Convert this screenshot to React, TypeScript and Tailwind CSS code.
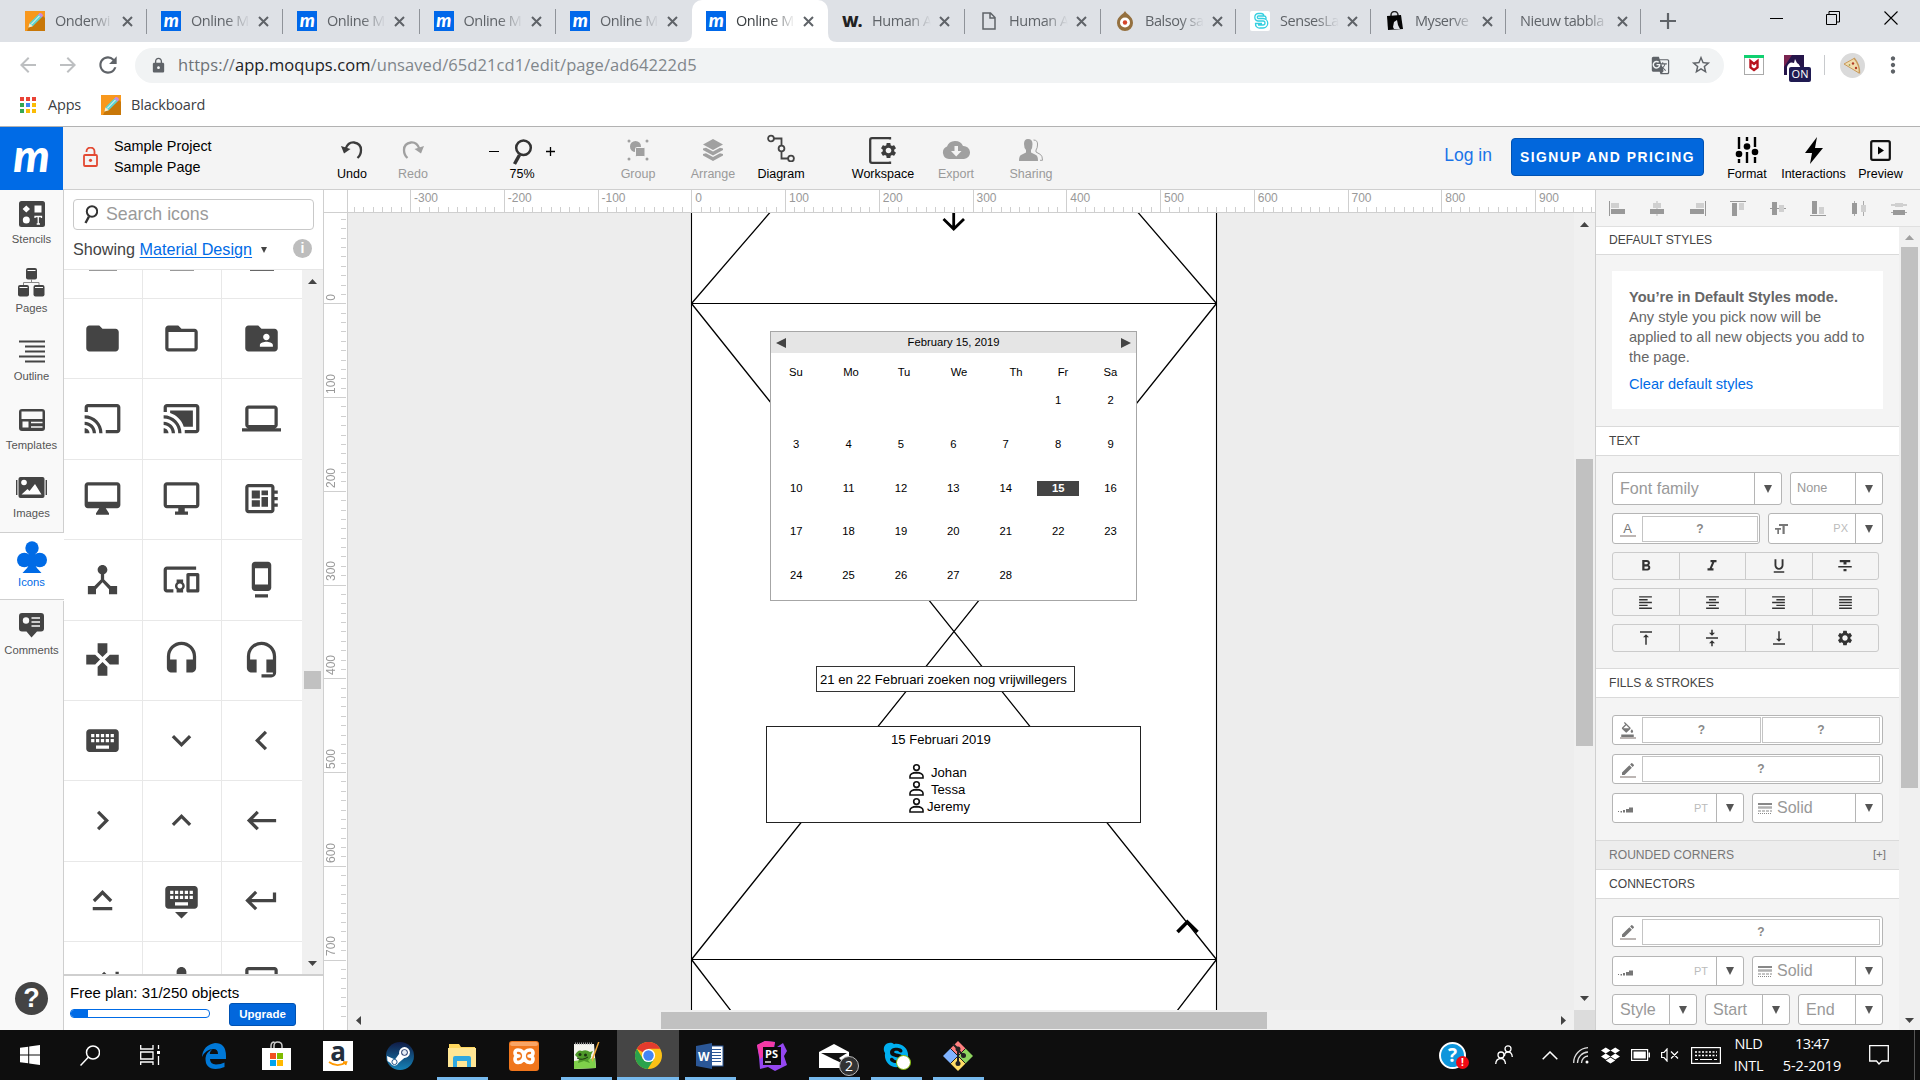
import React from "react";
import {
  MdFolder, MdFolderOpen, MdFolderShared, MdCast, MdCastConnected, MdLaptop, MdOutlineDesktopMac, MdOutlineDesktopWindows,
  MdDeveloperBoard, MdDeviceHub, MdDevicesOther, MdDock, MdGamepad, MdHeadset, MdHeadsetMic, MdKeyboard,
  MdKeyboardArrowDown, MdKeyboardArrowLeft, MdKeyboardArrowRight, MdKeyboardArrowUp, MdKeyboardBackspace,
  MdKeyboardCapslock, MdKeyboardHide, MdKeyboardReturn, MdKeyboardTab, MdKeyboardVoice, MdLaptopMac,
  MdArrowBack, MdArrowForward, MdRefresh, MdLock, MdStarBorder, MdMoreVert, MdGTranslate, MdSettings, MdEdit,
  MdFormatColorFill, MdVerticalAlignTop, MdVerticalAlignCenter, MdVerticalAlignBottom,
  MdFormatAlignLeft, MdFormatAlignCenter, MdFormatAlignRight, MdFormatAlignJustify, MdFormatBold, MdFormatItalic,
  MdFormatUnderlined, MdFormatStrikethrough,
} from "react-icons/md";
import { FaSkype, FaDropbox } from "react-icons/fa";

/* ---------- shared bits ---------- */

function Triangle({ dir, className = "" }: { dir: "up" | "down" | "left" | "right"; className?: string }) {
  const d = {
    up: "M0 5 L4.5 0 L9 5Z",
    down: "M0 0 L9 0 L4.5 5Z",
    left: "M5 0 L5 9 L0 4.5Z",
    right: "M0 0 L5 4.5 L0 9Z",
  }[dir];
  const wide = dir === "up" || dir === "down";
  return (
    <svg width={wide ? 9 : 5} height={wide ? 5 : 9} className={className} fill="currentColor">
      <path d={d} />
    </svg>
  );
}

function MLogo({ big = false }: { big?: boolean }) {
  return big ? (
    <div className="flex h-[63px] w-[63px] shrink-0 items-center justify-center bg-[#006be6]">
      <span className="-mt-2 font-['Lato'] text-[46px] leading-none font-black text-white italic">m</span>
    </div>
  ) : (
    <div className="flex h-5 w-5 shrink-0 items-center justify-center overflow-hidden bg-[#0068ea]">
      <span className="-mt-1 font-['Lato'] text-[19px] leading-none font-black text-white italic">m</span>
    </div>
  );
}

function PencilFavicon() {
  return (
    <svg width="20" height="20" viewBox="0 0 20 20" className="shrink-0">
      <rect width="20" height="20" fill="#f8981d" />
      <path d="M4 16 L17 4 L20 7 V20 H2Z" fill="#c87708" />
      <path d="M3.5 16.5 L4.6 12 L13.5 3.2 L16.8 6.2 L8 15Z" fill="#5fd3cf" />
      <path d="M6 13.6 L14.8 4.6" stroke="#fff" strokeWidth="1" />
      <path d="M13.2 3.4 L14.6 2 Q17.6 1.8 18 5 L16.8 6.4Z" fill="#c98be0" />
      <path d="M3.5 16.5 L4.4 12.6 L7.8 15.2Z" fill="#ffe9c8" />
    </svg>
  );
}

/* ---------- browser chrome ---------- */

type Tab = { title: string; icon: React.ReactNode; w: string; active?: boolean; sep?: boolean };

const WIcon = <span className="w-5 shrink-0 font-['Open_Sans'] text-[16px] leading-5 font-extrabold tracking-tighter text-[#222]">W.</span>;
const DocIcon = (
  <svg width="20" height="20" viewBox="0 0 20 20" className="shrink-0" fill="none" stroke="#5f6368" strokeWidth="1.5">
    <path d="M4 2 H11.5 L16 6.5 V18 H4Z M11 2 V7 H16" />
  </svg>
);
const BalsoyIcon = (
  <svg width="20" height="22" viewBox="0 0 20 22" className="shrink-0">
    <path d="M10 1 C11 4 18 6 18 13 A8 8 0 0 1 2 13 C2 6 9 4 10 1Z" fill="#94703f" />
    <circle cx="10" cy="12.5" r="5" fill="#fff" />
    <circle cx="10" cy="12.5" r="2.2" fill="#d4452c" />
  </svg>
);
const SensesIcon = (
  <svg width="20" height="20" viewBox="0 0 20 20" className="shrink-0" fill="none" stroke="#35cfe0" strokeWidth="1.3">
    <rect width="20" height="20" rx="2" fill="#fff" stroke="none" />
    <path d="M14 5 A3 3 0 0 0 11 2.5 H8 A3.8 3.8 0 0 0 8 10 H13 A1.500 1.500 0 0 1 13 14 H8 M16 8 V6.500 A2 2 0 0 0 14 5 H8 A1.5 1.5 0 0 0 8 7.500 H13 A4.300 4.300 0 0 1 13 17 H10 A4 4 0 0 1 5.500 12.500 H12" />
  </svg>
);
const ServeIcon = (
  <svg width="20" height="20" viewBox="0 0 20 20" className="shrink-0">
    <path d="M6 6 V4 A3.5 3.5 0 0 1 13 4 V6" fill="none" stroke="#222" strokeWidth="1.5" />
    <path d="M2 5 L16 4 L18 18 L3 19Z" fill="#050505" />
    <path d="M8 16 L9 11 L12 9 L13 14 L15 18 L9 18Z" fill="#dee1e6" />
  </svg>
);

const tabs: Tab[] = [
  { title: "Onderwi", icon: <PencilFavicon />, w: "w-[136px]", sep: true },
  { title: "Online M", icon: <MLogo />, w: "w-[136px]", sep: true },
  { title: "Online M", icon: <MLogo />, w: "w-[136.5px]", sep: true },
  { title: "Online M", icon: <MLogo />, w: "w-[136.5px]", sep: true },
  { title: "Online M", icon: <MLogo />, w: "w-[136px]" },
  { title: "Online M", icon: <MLogo />, w: "w-[136px]", active: true },
  { title: "Human A", icon: WIcon, w: "w-[137px]", sep: true },
  { title: "Human A", icon: DocIcon, w: "w-[136px]", sep: true },
  { title: "Balsoy sa", icon: BalsoyIcon, w: "w-[135px]", sep: true },
  { title: "SensesLa", icon: SensesIcon, w: "w-[135px]", sep: true },
  { title: "Myserve", icon: ServeIcon, w: "w-[135px]", sep: true },
  { title: "Nieuw tabbla", icon: null, w: "w-[135px]", sep: true },
];

function Cross() {
  return (
    <svg width="11" height="11" viewBox="0 0 11 11" className="shrink-0" stroke="#5f6368" strokeWidth="2">
      <path d="M1 1 L10 10 M10 1 L1 10" />
    </svg>
  );
}

function TabStrip() {
  return (
    <div className="flex h-[42px] bg-[#dee1e6] pl-[11px] font-['Open_Sans'] text-[14.5px] tracking-[-0.45px] text-[#5f6368]">
      {tabs.map((t, i) => (
        <div key={i} className={`${t.w} relative flex h-[42px] shrink-0 items-center pl-[14px] ${t.active ? "rounded-t-[10px] bg-white text-[#3c4043]" : ""}`}>
          {t.active && (
            <>
              <svg className="absolute bottom-0 -left-[9px]" width="9" height="9"><path d="M9 0 V9 H0 Q9 9 9 0Z" fill="#fff" /></svg>
              <svg className="absolute -right-[9px] bottom-0" width="9" height="9"><path d="M0 0 V9 H9 Q0 9 0 0Z" fill="#fff" /></svg>
            </>
          )}
          {t.icon}
          <span className={`${t.icon ? "ml-[10px] w-[59px]" : "w-[89px]"} [mask-image:linear-gradient(to_right,black_calc(100%-24px),transparent)] whitespace-nowrap`}>
            {t.title}
          </span>
          <span className="ml-[8px]"><Cross /></span>
          {t.sep && <div className="absolute top-[9px] right-0 h-[25px] w-px bg-[#8f9399]" />}
        </div>
      ))}
      <svg width="16" height="16" viewBox="0 0 16 16" className="mt-[13px] ml-[19px] shrink-0" stroke="#5f6368" strokeWidth="2.2"><path d="M8 0 V16 M0 8 H16" /></svg>
      <div className="mr-[22px] ml-auto flex h-[36px] items-center text-black">
        <div className="mr-[43px] h-px w-[13px] bg-black" />
        <svg width="14" height="14" viewBox="0 0 14 14" className="mr-[44px]" fill="none" stroke="#000"><path d="M.5 3.5 H10.500 V13.500 H.5Z M3 3 V.5 H13.500 V11 H11" /></svg>
        <svg width="14" height="14" viewBox="0 0 14 14" stroke="#000" strokeWidth="1.1"><path d="M.5 .5 L13.500 13.500 M13.500 .5 L.5 13.500" /></svg>
      </div>
    </div>
  );
}

function AddressBar() {
  return (
    <div className="flex h-[46px] items-center bg-white font-['Open_Sans']">
      <div className="flex w-[135px] shrink-0 items-center text-[#5f6368]">
        <MdArrowBack size={24} className="ml-4 text-[#bdbfc1]" />
        <MdArrowForward size={24} className="ml-4 text-[#bdbfc1]" />
        <MdRefresh size={26} className="ml-[15px]" />
      </div>
      <div className="flex h-[35px] w-[1589px] shrink-0 items-center rounded-full bg-[#f1f3f4] text-[#5f6368]">
        <MdLock size={17} className="ml-[15px]" />
        <span className="ml-[11px] text-[16.5px] tracking-[0.08px] text-[#80868b]">
          <span className="text-[#6d7277]">https://</span><span className="text-[#202124]">app.moqups.com</span>/unsaved/65d21cd1/edit/page/ad64222d5
        </span>
        <MdGTranslate size={19} className="mr-[20px] ml-auto" />
        <MdStarBorder size={22} className="mr-[12px]" />
      </div>
      <svg width="20" height="20" viewBox="0 0 20 20" className="ml-5 shrink-0">
        <rect x=".5" y=".5" width="19" height="19" fill="#fff" stroke="#aaa" />
        <rect width="20" height="3" fill="#10d070" />
        <path d="M6.500 6 V12.500 L10 15 L13.500 12.500 V6 L10 9Z" fill="none" stroke="#b8121c" strokeWidth="2.4" />
      </svg>
      <div className="relative ml-5 h-5 w-5 shrink-0">
        <svg width="20" height="20" viewBox="0 0 20 20">
          <rect width="20" height="20" fill="#25154a" />
          <path d="M0 0 L8 0 L0 12Z" fill="#7a2450" />
          <path d="M3 20 V12 Q5 6 10 8 L11 4 L13 8 Q17 9 17 20Z" fill="#fff" />
        </svg>
        <span className="absolute top-[12px] left-[5px] flex h-[15px] w-[22px] items-center justify-center rounded-[2px] bg-[#1f1a52] text-[11px] text-white">ON</span>
      </div>
      <div className="ml-[20px] h-5 w-px bg-[#c8cacd]" />
      <svg width="25" height="25" viewBox="0 0 25 25" className="ml-[15px] shrink-0">
        <circle cx="12.500" cy="12.500" r="12.500" fill="#dadada" />
        <path d="M4 11 L14 5.500 Q19 12 19 20Z" fill="#f0dcae" />
        <path d="M4 11 L14 5.500 M4 11 L19 20" stroke="#c99a5a" />
        <path d="M14 5 Q20 12 19.500 20.500" fill="none" stroke="#c99a5a" strokeWidth="1.500" />
        <circle cx="13" cy="10.500" r="1.200" fill="#b23a24" /><circle cx="16" cy="15" r="1.200" fill="#b23a24" /><circle cx="9.500" cy="12" r=".8" fill="#7a8a3a" />
      </svg>
      <MdMoreVert size={26} className="ml-[15px] shrink-0 text-[#5f6368]" />
    </div>
  );
}

const appColors = [
  "bg-[#ea4335]", "bg-[#ea4335]", "bg-[#ea4335]",
  "bg-[#34a853]", "bg-[#4285f4]", "bg-[#fbbc05]",
  "bg-[#34a853]", "bg-[#fbbc05]", "bg-[#fbbc05]",
];

function Bookmarks() {
  return (
    <div className="flex h-[39px] items-center border-b border-[#b2b2b2] bg-white pb-[4px] pl-5 font-['Open_Sans'] text-[14.5px] tracking-[-0.2px] text-[#3c4043]">
      <div className="grid grid-cols-3 gap-[2px]">
        {appColors.map((c, i) => <div key={i} className={`h-1 w-1 ${c}`} />)}
      </div>
      <span className="ml-[12px] w-[53px]">Apps</span>
      <PencilFavicon />
      <span className="ml-[10px]">Blackboard</span>
    </div>
  );
}

/* ---------- app header ---------- */

function Tool({ label, icon, w, dim, cls = "" }: { label: string; icon: React.ReactNode; w: string; dim?: boolean; cls?: string }) {
  return (
    <div className={`${w} ${cls} flex shrink-0 flex-col items-center ${dim ? "text-[#9a9a9a]" : "text-black"}`}>
      <div className={`flex h-[34px] items-center ${dim ? "text-[#a0a0a0]" : "text-[#3c3c3c]"}`}>{icon}</div>
      <span className="text-[12.5px] leading-[14px] whitespace-nowrap">{label}</span>
    </div>
  );
}

const UndoIcon = (
  <svg width="22" height="20" viewBox="0 0 22 20" fill="none" stroke="currentColor" strokeWidth="2.300">
    <path d="M4.500 9 Q7 2 13 2.500 Q20 3.500 20 10 Q20 15 16.500 18" />
    <path d="M0 6 L3 13.500 L9.500 9Z" fill="currentColor" stroke="none" />
  </svg>
);

function Header() {
  return (
    <header className="flex h-[63px] bg-[#f4f4f4]">
      <MLogo big />
      <div className="flex h-[63px] flex-1 border-b border-[#cfcfcf] pt-[6px]">
        <svg width="15" height="20" viewBox="0 0 15 20" className="mt-[14px] ml-[20px] shrink-0" fill="none" stroke="#e34a33" strokeWidth="1.800">
          <rect x="1" y="8" width="13" height="11" rx="1" />
          <path d="M3.500 5 V4.500 A4 4 0 0 1 11.500 4.500 V8" />
          <circle cx="7.500" cy="13.300" r="1.600" fill="#e34a33" stroke="none" />
        </svg>
        <div className="ml-[16px] w-[200px] pt-[3px] text-[14.4px] leading-[21px] text-black">
          <div>Sample Project</div>
          <div>Sample Page</div>
        </div>
        <Tool cls="ml-[8px]" w="w-[60px]" label="Undo" icon={UndoIcon} />
        <Tool cls="ml-[1px]" w="w-[60px]" label="Redo" dim icon={<span className="-scale-x-100">{UndoIcon}</span>} />
        <span className="mt-[18px] ml-[46px] h-px w-[10px] bg-black" />
        <Tool cls="ml-[2px]" w="w-[42px]" label="75%" icon={
          <svg width="22" height="26" viewBox="0 0 22 26" className="mt-1" fill="none" stroke="#333">
            <circle cx="12.500" cy="8.800" r="7.300" strokeWidth="2.500" /><path d="M8.500 16 L3.500 25" strokeWidth="3.500" />
          </svg>
        } />
        <svg width="9" height="9" viewBox="0 0 9 9" className="mt-[14px] ml-[3px] shrink-0" stroke="#000" strokeWidth="1.300"><path d="M4.500 0 V9 M0 4.500 H9" /></svg>
        <Tool cls="ml-[53px]" w="w-[60px]" label="Group" dim icon={
          <svg width="22" height="22" viewBox="0 0 22 22" fill="currentColor">
            <circle cx="2" cy="2" r="1.500" /><circle cx="20" cy="2" r="1.500" /><circle cx="2" cy="20" r="1.500" /><circle cx="20" cy="20" r="1.500" />
            <circle cx="8.500" cy="7.500" r="5.500" /><rect x="8.500" y="8.500" width="9.500" height="9" rx="1" stroke="#f4f4f4" />
          </svg>
        } />
        <Tool cls="ml-[15px]" w="w-[60px]" label="Arrange" dim icon={
          <svg width="20" height="22" viewBox="0 0 20 22" fill="currentColor">
            <path d="M10 0 L20 5.500 L10 11 L0 5.500Z" />
            <path d="M0 9.500 L3 8.700 L10 12.500 L17 8.700 L20 9.500 V11 L10 16.500 L0 11Z M0 15 L3 14.200 L10 18 L17 14.200 L20 15 V16.500 L10 22 L0 16.500Z" />
          </svg>
        } />
        <Tool cls="ml-[8px]" w="w-[60px]" label="Diagram" icon={
          <svg width="28" height="28" viewBox="0 0 28 28" fill="none" stroke="#444" strokeWidth="1.800" className="-mt-1">
            <path d="M6 4.500 H14.500 V24.500 H22" />
            <g fill="#f4f4f4"><circle cx="4" cy="4.500" r="2.900" /><circle cx="14.500" cy="14.500" r="2.900" /><circle cx="24" cy="24.500" r="2.900" /></g>
          </svg>
        } />
        <Tool cls="ml-[37px]" w="w-[70px]" label="Workspace" icon={
          <div className="relative flex h-[27px] w-[28px]">
            <svg width="28" height="27" viewBox="0 0 28 27" fill="none" stroke="#3c3c3c" strokeWidth="2.300"><path d="M21 2.500 V1.200 H3 Q1.200 1.200 1.200 3 V24 Q1.200 25.800 3 25.800 H21 V24.500" /></svg>
            <MdSettings size={19} className="absolute top-[4px] left-[10px]" />
          </div>
        } />
        <Tool cls="ml-[8px]" w="w-[60px]" label="Export" dim icon={
          <svg width="28" height="20" viewBox="0 0 28 20" fill="currentColor">
            <path d="M7 19 A6.500 6.500 0 0 1 5 6.500 A8.500 8 0 0 1 21 6 A6.500 6.500 0 0 1 22 19Z" />
            <path d="M12.500 6 H16 V11 H19.500 L14.200 16.500 L9 11 H12.500Z" fill="#f4f4f4" />
          </svg>
        } />
        <Tool cls="ml-[15px]" w="w-[60px]" label="Sharing" dim icon={
          <svg width="26" height="22" viewBox="0 0 26 22" fill="currentColor">
            <path d="M6 5 Q6 0 10 0 Q14.500 0 14.500 5 Q14.500 9 13 11 V13.500 L18 16 Q20 17 20 22 H1 Q1 17 3 16 L8 13.500 V11 Q6 9 6 5Z" />
            <path d="M15.500 1 Q20 1 19.500 6 Q19.500 9 18 11 V13 L22.500 15.500 Q24.500 17 24.500 21.300 H22" fill="none" stroke="currentColor" />
          </svg>
        } />
        <a className="ml-auto pt-[12px] text-[17.5px] leading-[21px] text-[#1a73e8]">Log in</a>
        <button className="mt-[5px] ml-[19px] h-[38px] w-[193px] rounded border border-[#0052b3] bg-[#0267dc] text-[13.9px] font-bold tracking-[1.5px] whitespace-nowrap text-white">SIGNUP AND PRICING</button>
        <Tool cls="ml-[13px]" w="w-[60px]" label="Format" icon={
          <svg width="24" height="26" viewBox="0 0 24 26" stroke="#000" strokeWidth="2.400">
            <path d="M4 0 V12 M4 22 V26 M12 0 V4 M12 15 V26 M20 0 V10 M20 20 V26" />
            <g stroke="none"><circle cx="4" cy="17" r="3.300" /><circle cx="12" cy="9.500" r="3.300" /><circle cx="20" cy="15" r="3.300" /></g>
          </svg>
        } />
        <Tool cls="" w="w-[73px]" label="Interactions" icon={
          <svg width="20" height="27" viewBox="0 0 20 27"><path d="M13 0 L1 16 H8 L6 27 L19 11 H11Z" fill="#000" /></svg>
        } />
        <Tool cls="mr-[9px]" w="w-[61px]" label="Preview" icon={
          <svg width="21" height="21" viewBox="0 0 21 21"><rect x="1.200" y="1.200" width="18.600" height="18.600" rx="1.500" fill="none" stroke="#111" strokeWidth="2.200" /><path d="M8 6.500 L14 10.500 L8 14.500Z" /></svg>
        } />
      </div>
    </header>
  );
}

/* ---------- left rail ---------- */

const rail: { label: string; icon: React.ReactNode; active?: boolean }[] = [
  { label: "Stencils", icon: (
    <svg width="26" height="26" viewBox="0 0 26 26"><rect width="26" height="26" rx="2.500" fill="#444" /><path d="M7.300 4.500 L11 8 L7.300 11.500 L3.600 8Z M15.500 4.500 H22.500 V11.500 H15.500Z" fill="#fff" /><circle cx="7.300" cy="19" r="3.500" fill="#fff" /><path d="M16 17 V15.500 H22.500 V17 M19.250 15.500 V23 M17.700 23 H21" stroke="#fff" strokeWidth="1.300" fill="none" /></svg>
  ) },
  { label: "Pages", icon: (
    <svg width="27" height="29" viewBox="0 0 27 29"><g fill="#444"><rect x="8" width="11" height="11.500" rx="2" /><rect y="17" width="11" height="11.500" rx="2" /><rect x="15.500" y="17" width="11" height="11.500" rx="2" /></g><path d="M9.500 2.500 H17.500 M1.500 19.500 H9.500 M17 19.500 H25" stroke="#fff" /><path d="M13.500 11 V14.500 M5.500 17 V14.500 H21 V17" stroke="#888" fill="none" /></svg>
  ) },
  { label: "Outline", icon: (
    <svg width="26" height="23" viewBox="0 0 26 23" stroke="#444" strokeWidth="2"><path d="M0 1.500 H26 M6 6.500 H26 M6 11.500 H26 M0 16.500 H26 M6 21.500 H26" /></svg>
  ) },
  { label: "Templates", icon: (
    <svg width="26" height="22" viewBox="0 0 26 22"><rect width="26" height="22" rx="3" fill="#444" /><path d="M2.500 2.500 H23.500 V10 H2.500Z M3.500 12.500 H9.500 V18.500 H3.500Z" fill="#f9f9f9" /><path d="M12 13.500 H23.500 M12 18 H23.500" stroke="#f9f9f9" strokeWidth="1.600" /></svg>
  ) },
  { label: "Images", icon: (
    <svg width="31" height="22" viewBox="0 0 31 22"><rect x="2.500" y="0" width="26" height="21" rx="2" fill="#444" /><path d="M.7 3 V18 M30.300 3 V18" stroke="#444" strokeWidth="1.400" /><circle cx="8" cy="5.500" r="2.800" fill="#fff" /><path d="M5.500 17.500 L11.500 12 L13.500 14 L19 7 L25.500 17.500Z" fill="#fff" /></svg>
  ) },
  { label: "Icons", active: true, icon: (
    <svg width="30" height="32" viewBox="0 0 30 32" fill="#006be6"><circle cx="15" cy="7" r="6.700" /><circle cx="7.300" cy="19" r="7.300" /><circle cx="22.700" cy="19" r="7.300" /><path d="M11 10 H19 L17 22 Q19 27 24.500 32 H5.500 Q11 27 13 22Z" /></svg>
  ) },
  { label: "Comments", icon: (
    <svg width="25" height="25" viewBox="0 0 25 25"><path d="M3 0 H22 Q25 0 25 3 V15.500 Q25 18.500 22 18.500 H18 L12.500 24.500 L7.500 18.500 H3 Q0 18.500 0 15.500 V3 Q0 0 3 0Z" fill="#444" /><circle cx="7" cy="7.500" r="3.200" fill="#f9f9f9" /><path d="M12.500 5 H21 M12.500 9 H21 M12.500 13 H21" stroke="#f9f9f9" strokeWidth="1.700" /></svg>
  ) },
];

function Rail() {
  return (
    <nav className="flex w-[64px] shrink-0 flex-col bg-[#f9f9f9]">
      {rail.map((r) => (
        <div key={r.label} className={`flex h-[68.5px] shrink-0 flex-col items-center ${r.active ? "-mt-px mb-px border-y border-[#cfcfcf] bg-white pr-px text-[#006be6]" : "border-r border-[#cfcfcf] text-[#555]"}`}>
          <div className="mt-[7px] flex h-[34px] items-center">{r.icon}</div>
          <span className="text-[11.25px] leading-[16px]">{r.label}</span>
        </div>
      ))}
      <div className="flex flex-1 items-end justify-center border-r border-[#cfcfcf] pb-[15px]">
        <div className="flex h-[33px] w-[33px] items-center justify-center rounded-full bg-[#444] text-[27px] font-bold text-white">?</div>
      </div>
    </nav>
  );
}

/* ---------- icon library panel ---------- */

const iconRows = [
  [MdFolder, MdFolderOpen, MdFolderShared],
  [MdCast, MdCastConnected, MdLaptop],
  [MdOutlineDesktopMac, MdOutlineDesktopWindows, MdDeveloperBoard],
  [MdDeviceHub, MdDevicesOther, MdDock],
  [MdGamepad, MdHeadset, MdHeadsetMic],
  [MdKeyboard, MdKeyboardArrowDown, MdKeyboardArrowLeft],
  [MdKeyboardArrowRight, MdKeyboardArrowUp, MdKeyboardBackspace],
  [MdKeyboardCapslock, MdKeyboardHide, MdKeyboardReturn],
  [MdKeyboardTab, MdKeyboardVoice, MdLaptopMac],
];

function IconPanel() {
  return (
    <aside className="flex w-[260px] shrink-0 flex-col border-r border-[#cfcfcf] bg-white">
      <div className="mt-[9px] ml-[9px] flex h-[31px] w-[241px] shrink-0 items-center rounded border border-[#c9c9c9]">
        <svg width="14" height="19" viewBox="0 0 14 19" className="ml-[10px]" fill="none" stroke="#333"><circle cx="8" cy="6.500" r="5.200" strokeWidth="2" /><path d="M5 11.500 L1.500 18" strokeWidth="2.400" /></svg>
        <span className="ml-[8px] text-[17.75px] text-[#9a9a9a]">Search icons</span>
      </div>
      <div className="flex h-[39px] shrink-0 items-center pr-[11px] pl-[9px] text-[16.2px] text-[#444]">
        <span>Showing <span className="text-[#006be6] underline underline-offset-2">Material Design</span></span>
        <svg width="6" height="6" className="ml-[9px]"><path d="M0 0 H6 L3 6Z" fill="#444" /></svg>
        <span className="mb-[3px] ml-auto flex h-[19px] w-[19px] items-center justify-center rounded-full bg-[#bdbdbd] text-[14px] font-bold text-white">i</span>
      </div>
      <div className="flex min-h-0 flex-1 border-t border-[#e6e6e6]">
        <div className="flex w-[238px] flex-col overflow-hidden text-[#444]">
          <div className="flex h-[29px] shrink-0 border-b border-[#e8e8e8]">
            <div className="flex w-[79px] justify-center border-r border-[#e8e8e8]"><div className="h-px w-7 bg-[#999]" /></div>
            <div className="flex w-[79px] justify-center border-r border-[#e8e8e8]"><div className="h-px w-6 bg-[#999]" /></div>
            <div className="flex w-[80px] justify-center"><div className="h-px w-6 bg-[#666]" /></div>
          </div>
          {iconRows.map((row, i) => (
            <div key={i} className="flex h-[80.4px] shrink-0 border-b border-[#e8e8e8]">
              {row.map((Icon, j) => (
                <div key={j} className={`flex w-[79px] shrink-0 items-center justify-center pb-px ${j < 2 ? "border-r border-[#e8e8e8] pr-px" : ""}`}>
                  <Icon size={39} />
                </div>
              ))}
            </div>
          ))}
        </div>
        <div className="flex flex-1 flex-col items-center bg-[#f0f0f0] text-[#444]">
          <Triangle dir="up" className="mt-[9px]" />
          <div className="mt-[387px] h-[18px] w-[17px] bg-[#c1c1c1]" />
          <Triangle dir="down" className="mt-auto mb-[8px]" />
        </div>
      </div>
      <div className="h-[56px] shrink-0 border-t-2 border-[#cfcfcf] pl-[6px] text-black">
        <div className="pt-[7px] text-[15px] leading-[20px]">Free plan: 31/250 objects</div>
        <div className="flex">
          <div className="mt-[6px] h-[9px] w-[140px] overflow-hidden rounded-[4px] border border-[#006be6]"><div className="h-full w-[17px] bg-[#006be6]" /></div>
          <button className="ml-[19px] h-[23px] w-[67px] rounded-[3px] border border-[#0052b3] bg-[#0267dc] text-[11.5px] font-bold text-white">Upgrade</button>
        </div>
      </div>
    </aside>
  );
}

/* ---------- canvas ---------- */

const hMarks = [-300, -200, -100, 0, 100, 200, 300, 400, 500, 600, 700, 800, 900];
const vMarks = [0, 100, 200, 300, 400, 500, 600, 700];
const ten = Array.from({ length: 10 }, (_, i) => i);

function HRuler() {
  return (
    <div className="flex h-[23px] shrink-0 border-b border-[#cfcfcf] bg-white text-[12px] text-[#999]">
      <div className="w-[24px] shrink-0 border-r border-[#cfcfcf]" />
      <div className="flex min-w-0 flex-1 overflow-hidden">
        <div className="flex">
          <div className="flex w-[62px] shrink-0 items-end justify-end">
            {ten.slice(0, 6).map((i) => <div key={i} className="h-[5px] w-[9.375px] shrink-0 border-l border-[#cfcfcf]" />)}
          </div>
          {hMarks.map((m) => (
            <div key={m} className="relative flex w-[93.75px] shrink-0 items-end">
              {ten.map((i) => <div key={i} className={`w-[9.375px] shrink-0 border-l border-[#cfcfcf] ${i === 0 ? "h-full" : "h-[5px]"}`} />)}
              <span className="absolute top-px left-[4px] leading-[14px]">{m}</span>
            </div>
          ))}
        </div>
      </div>
    </div>
  );
}

function VRuler() {
  return (
    <div className="w-[24px] shrink-0 overflow-hidden border-r border-[#cfcfcf] bg-white text-[12px] text-[#999]">
      <div className="-mt-[2.500px]">
        {vMarks.map((m) => (
          <div key={m} className="relative flex h-[93.75px] flex-col items-end pr-[1px]">
            {ten.map((i) => <div key={i} className={`h-[9.375px] shrink-0 border-b border-[#cfcfcf] ${i === 9 ? "w-full" : "w-[5px]"}`} />)}
            <span className="absolute bottom-[4px] left-[1px] rotate-180 leading-[13px] [writing-mode:vertical-rl]">{m}</span>
          </div>
        ))}
        <div className="flex h-[56px] flex-col items-end overflow-hidden pr-[1px]">
          {ten.map((i) => <div key={i} className="h-[9.375px] w-[5px] shrink-0 border-b border-[#cfcfcf]" />)}
        </div>
      </div>
    </div>
  );
}

const dayNames = [["Su", 796], ["Mo", 851], ["Tu", 904], ["We", 959], ["Th", 1016], ["Fr", 1063], ["Sa", 1110.5]] as const;
const weeks = [
  ["", "", "", "", "", "1", "2"],
  ["3", "4", "5", "6", "7", "8", "9"],
  ["10", "11", "12", "13", "14", "15", "16"],
  ["17", "18", "19", "20", "21", "22", "23"],
  ["24", "25", "26", "27", "28", "", ""],
];

function Calendar() {
  return (
    <div className="absolute top-[118px] left-[422px] h-[270px] w-[367px] border border-[#a6a6a6] bg-white text-[11.25px] text-black">
      <div className="flex h-[21px] items-center justify-between bg-[#e5e5e5] px-[5px]">
        <svg width="10" height="10"><path d="M10 0 V10 L0 5Z" fill="#444" /></svg>
        <span>February 15, 2019</span>
        <svg width="10" height="10"><path d="M0 0 V10 L10 5Z" fill="#444" /></svg>
      </div>
      <div className="relative h-[40px]">
        {dayNames.map(([d, x]) => (
          <span key={d} className="absolute top-[11px] w-8 text-center leading-[16px]" style={{ left: x - 771 - 16 }}>{d}</span>
        ))}
      </div>
      {weeks.map((w, i) => (
        <div key={i} className="-mr-2 -ml-[1px] flex h-[43.800px] items-start">
          {w.map((d, j) => (
            <div key={j} className="flex w-[52.400px] shrink-0 justify-center">
              <span className={`h-[15px] w-[42px] text-center leading-[15px] ${d === "15" ? "bg-[#444] font-bold text-white" : ""}`}>{d}</span>
            </div>
          ))}
        </div>
      ))}
    </div>
  );
}

function PersonRow({ name, cls, gap }: { name: string; cls: string; gap: string }) {
  return (
    <div className={`ml-[142px] flex h-[17.200px] items-center ${cls}`}>
      <svg width="15" height="15" viewBox="0 0 15 15" className="mb-[2px]" fill="none" stroke="#111" strokeWidth="1.600">
        <circle cx="7.500" cy="3.600" r="2.800" />
        <path d="M1 14 V12 Q1.500 8.800 7.500 8.600 Q13.500 8.800 14 12 V14Z" />
      </svg>
      <span className={gap}>{name}</span>
    </div>
  );
}

function Canvas() {
  return (
    <main className="flex min-w-0 flex-1 flex-col">
      <HRuler />
      <div className="flex min-h-0 flex-1">
        <VRuler />
        <div className="flex min-w-0 flex-1 flex-col">
          <div className="flex min-h-0 flex-1">
            <div className="relative h-[797px] w-[1226px] shrink-0 overflow-hidden bg-[#ededed]">
              <svg width="1226" height="797" viewBox="348 213 1226 797" className="absolute top-0 left-0" fill="none" stroke="#000" strokeWidth="1.100">
                <rect x="691.500" y="200" width="525" height="820" fill="#fff" />
                <path d="M691.500 303.500 H1216.500 M691.500 959.500 H1216.500" />
                <path d="M691.500 303.500 L1216.500 959.500 M1216.500 303.500 L691.500 959.500" strokeWidth="1.300" />
                <path d="M691.500 303.500 L1216.500 -305.500 M1216.500 303.500 L691.500 -305.500" strokeWidth="1.300" />
                <path d="M691.500 959.500 L1216.500 1643 M1216.500 959.500 L691.500 1643" strokeWidth="1.300" />
                <path d="M953.700 205 V229 M943.500 219 L953.700 229 L964 219" strokeWidth="2.800" />
                <path d="M1177.500 932 L1187.300 922 L1197.500 932" strokeWidth="3.600" />
              </svg>
              <Calendar />
              <div className="absolute top-[453px] left-[468px] flex h-[26px] w-[259px] items-center border border-[#333] bg-white pt-px pl-[3px] text-[13.15px] whitespace-nowrap text-black">21 en 22 Februari zoeken nog vrijwillegers</div>
              <div className="absolute top-[513px] left-[418px] h-[97px] w-[375px] border border-[#222] bg-white text-[13.125px] leading-[17px] text-black">
                <div className="mt-[4px] ml-[124px]">15 Februari 2019</div>
                <PersonRow name="Johan" cls="mt-[16px]" gap="ml-[7px]" />
                <PersonRow name="Tessa" cls="" gap="ml-[7px]" />
                <PersonRow name="Jeremy" cls="" gap="ml-[3px]" />
              </div>
            </div>
            <div className="flex w-[21px] shrink-0 flex-col items-center bg-[#f0f0f0] text-[#444]">
              <Triangle dir="up" className="mt-[9px]" />
              <div className="mt-[232px] h-[287px] w-[17px] bg-[#c1c1c1]" />
              <Triangle dir="down" className="mt-auto mb-[9px]" />
            </div>
          </div>
          <div className="flex h-5 shrink-0 bg-[#f0f0f0] text-[#444]">
            <div className="flex flex-1 items-center">
              <Triangle dir="left" className="ml-2" />
              <div className="ml-[300px] h-[17px] w-[606px] bg-[#c1c1c1]" />
              <Triangle dir="right" className="mr-[8px] ml-auto" />
            </div>
            <div className="w-[21px] bg-[#dcdcdc]" />
          </div>
        </div>
      </div>
    </main>
  );
}

/* ---------- format panel ---------- */

function Section({ title, muted }: { title: string; muted?: boolean }) {
  return (
    <div className={`flex shrink-0 items-center justify-between border-[#dadada] pr-[13px] pl-[13px] text-[12.100px] ${muted ? "h-[29px] border-t bg-[#ededed] text-[#777]" : "h-[30px] border-y bg-white text-[#444]"}`}>
      <span>{title}</span>
      {muted && <span className="text-[11.500px]">[+]</span>}
    </div>
  );
}

const box = "flex shrink-0 items-center rounded-[3px] border border-[#b5b5b5] bg-white";

function Caret({ cls = "w-[27px]" }: { cls?: string }) {
  return (
    <div className={`flex h-full shrink-0 items-center justify-center border-l border-[#b5b5b5] ${cls}`}>
      <svg width="8" height="8"><path d="M0 0 H8 L4 8Z" fill="#555" /></svg>
    </div>
  );
}

function Unknown({ cls }: { cls: string }) {
  return <div className={`flex h-[26px] items-center justify-center border border-[#c4c4c4] text-[12px] font-bold text-[#888] ${cls}`}>?</div>;
}

function Swatch({ children }: { children: React.ReactNode }) {
  return (
    <div className="flex w-[29px] shrink-0 flex-col items-center pt-[1px] text-[#777]">
      <div className="flex h-[14px] items-center">{children}</div>
      <div className="h-[2px] w-4 bg-[#bcb6b4]" />
    </div>
  );
}

function StrokeRow({ top }: { top: string }) {
  return (
    <div className={`flex gap-2 ${top}`}>
      <div className={`${box} h-[30px] w-[132px]`}>
        <svg width="15" height="6" className="mt-[3px] ml-[5px]" fill="#777"><path d="M0 4h1v1H0z M2.500 4h1.500v1.500H2.500z M5 3h2v2.500H5z M8 2h3v3.500H8z M11 .5h4v5h-4z" /></svg>
        <span className="mr-[8px] ml-auto text-[11px] text-[#bbb]">PT</span>
        <Caret />
      </div>
      <div className={`${box} h-[30px] w-[131px]`}>
        <svg width="14" height="12" className="mt-[2px] ml-[5px]" stroke="#888"><path d="M0 1 H14" strokeWidth="2" /><path d="M0 4.500 H14" strokeWidth="2.500" stroke="#b0b0b0" /><path d="M0 8 H14" strokeDasharray="3 1" /><path d="M0 10.500 H14" strokeDasharray="1 1" /></svg>
        <span className="ml-[5px] text-[16px] text-[#999]">Solid</span>
        <Caret cls="ml-auto w-[27px]" />
      </div>
    </div>
  );
}

const buttonRows = [
  [MdFormatBold, MdFormatItalic, MdFormatUnderlined, MdFormatStrikethrough],
  [MdFormatAlignLeft, MdFormatAlignCenter, MdFormatAlignRight, MdFormatAlignJustify],
  [MdVerticalAlignTop, MdVerticalAlignCenter, MdVerticalAlignBottom, MdSettings],
];

const alignIcons = [
  <><path d="M.5 0 V15" stroke="#999" /><rect x="2" y="2" width="8" height="5" fill="#d0d0d0" /><rect x="2" y="8" width="14" height="5" fill="#999" /></>,
  <><path d="M8 0 V15" stroke="#bbb" /><rect x="4" y="2" width="8" height="5" fill="#d0d0d0" /><rect x="1" y="8" width="14" height="5" fill="#999" /></>,
  <><path d="M15.500 0 V15" stroke="#999" /><rect x="6" y="2" width="8" height="5" fill="#d0d0d0" /><rect x="0" y="8" width="14" height="5" fill="#999" /></>,
  <><path d="M0 .5 H16" stroke="#999" /><rect x="2" y="2" width="5" height="13" fill="#999" /><rect x="9" y="2" width="5" height="7" fill="#d0d0d0" /></>,
  <><path d="M0 7.500 H16" stroke="#999" /><rect x="2" y="1" width="5" height="13" fill="#999" /><rect x="9" y="4" width="5" height="7" fill="#d0d0d0" /></>,
  <><path d="M0 14.500 H16" stroke="#999" /><rect x="2" y="0" width="5" height="13" fill="#999" /><rect x="9" y="6" width="5" height="7" fill="#d0d0d0" /></>,
  <><path d="M3.500 0 V15 M12.500 0 V15" stroke="#aaa" /><rect x="1" y="2" width="5" height="11" fill="#999" /><rect x="10" y="4" width="5" height="7" fill="#d0d0d0" /></>,
  <><path d="M0 4 H16 M0 11.500 H16" stroke="#aaa" /><rect x="4" y="2" width="8" height="4" fill="#d0d0d0" /><rect x="2" y="9" width="12" height="5" fill="#999" /></>,
];

function FormatPanel() {
  return (
    <aside className="flex w-[325px] shrink-0 flex-col border-l border-[#cfcfcf] bg-[#f4f4f4]">
      <div className="flex h-[37px] shrink-0 items-center gap-[24.300px] border-b border-[#e0e0e0] pl-[13px]">
        {alignIcons.map((c, i) => <svg key={i} width="16" height="15" className="shrink-0">{c}</svg>)}
      </div>
      <div className="flex min-h-0 flex-1">
        <div className="flex w-[303px] shrink-0 flex-col overflow-hidden">
          <div className="h-[28px] shrink-0 border-b border-[#dadada] bg-white pl-[13px] text-[12.100px] leading-[26px] text-[#444]">DEFAULT STYLES</div>
          <div className="mt-4 ml-4 h-[138px] w-[271px] shrink-0 bg-white pt-[16px] pl-[17px] text-[14.600px] leading-5 text-[#666]">
            <div className="font-bold">You’re in Default Styles mode.</div>
            <div>Any style you pick now will be</div>
            <div>applied to all new objects you add to</div>
            <div>the page.</div>
            <div className="mt-[7px] text-[#006be6]">Clear default styles</div>
          </div>
          <div className="h-[17px] shrink-0" />
          <Section title="TEXT" />
          <div className="h-[212px] shrink-0 pl-4">
            <div className="flex gap-2 pt-4">
              <div className={`${box} h-[33px] w-[170px]`}><span className="ml-[7px] text-[16.100px] text-[#999]">Font family</span><Caret cls="ml-auto w-[27px]" /></div>
              <div className={`${box} h-[33px] w-[93px]`}><span className="ml-[6px] text-[12.700px] text-[#999]">None</span><Caret cls="ml-auto w-[27px]" /></div>
            </div>
            <div className="flex gap-2 pt-2">
              <div className={`${box} h-[31px] w-[148px]`}>
                <Swatch><span className="text-[13px] leading-none">A</span></Swatch><Unknown cls="w-[116px]" />
              </div>
              <div className={`${box} h-[31px] w-[115px]`}>
                <svg width="13" height="10" className="ml-[6px]" fill="#777"><path d="M4 0 H13 V2 H9.700 V10 H7.500 V2 H4Z M0 4 H6 V5.700 H4 V10 H2.300 V5.700 H0Z" /></svg>
                <span className="mr-[7px] ml-auto text-[11px] text-[#bbb]">PX</span>
                <Caret />
              </div>
            </div>
            {buttonRows.map((row, i) => (
              <div key={i} className="mt-2 flex h-[28px] w-[267px] divide-x divide-[#cbcbcb] rounded-[3px] border border-[#cbcbcb] text-[#333]">
                {row.map((Icon, j) => <div key={j} className="flex flex-1 items-center justify-center"><Icon size={i === 1 ? 17 : 18} /></div>)}
              </div>
            ))}
          </div>
          <Section title="FILLS & STROKES" />
          <div className="h-[142px] shrink-0 pl-4">
            <div className={`${box} mt-[17px] h-[30px] w-[271px]`}>
              <Swatch><MdFormatColorFill size={15} /></Swatch><Unknown cls="w-[119px]" /><Unknown cls="ml-px w-[118px]" />
            </div>
            <div className={`${box} mt-[9px] h-[30px] w-[271px]`}><Swatch><MdEdit size={16} /></Swatch><Unknown cls="w-[238px]" /></div>
            <StrokeRow top="mt-[9px]" />
          </div>
          <Section title="ROUNDED CORNERS" muted />
          <Section title="CONNECTORS" />
          <div className="shrink-0 pl-4">
            <div className={`${box} mt-[17px] h-[31px] w-[271px]`}><Swatch><MdEdit size={16} /></Swatch><Unknown cls="w-[238px]" /></div>
            <StrokeRow top="mt-[9px]" />
            <div className="mt-2 flex gap-2">
              {["Style", "Start", "End"].map((s) => (
                <div key={s} className={`${box} h-[31px] w-[85px]`}><span className="ml-[7px] text-[16.100px] text-[#999]">{s}</span><Caret cls="ml-auto w-[27px]" /></div>
              ))}
            </div>
          </div>
        </div>
        <div className="flex flex-1 flex-col items-center bg-[#f0f0f0]">
          <Triangle dir="up" className="mt-[8px] text-[#a0a0a0]" />
          <div className="mt-[7px] h-[541px] w-[17px] bg-[#c1c1c1]" />
          <Triangle dir="down" className="mt-auto mb-[7px] text-[#444]" />
        </div>
      </div>
    </aside>
  );
}

/* ---------- Windows taskbar ---------- */

const taskIcons: { icon: React.ReactNode; open?: boolean; focus?: boolean }[] = [
  { icon: (
    <svg width="26" height="26" viewBox="0 0 26 26"><path d="M1 14 Q2 2 14 0 Q25 0 25 13 V16 H9 Q9 21 15 21.500 Q20 21.500 23.500 19.500 V24 Q19 26 14.500 26 Q4 25.500 4.500 15 Q5 9 11 6.500 Q9 8.500 8.800 11 H17 Q17 6 12.500 6 Q5 6 1 14Z" fill="#0078d7" /></svg>
  ) },
  { icon: (
    <svg width="29" height="29" viewBox="0 0 29 29"><path d="M9 8 V5 Q9 1 12.500 1 M12 8 V5 Q12 1 15.500 1 Q20 1 20 5 V8" fill="none" stroke="#ccc" strokeWidth="1.500" /><rect y="7" width="29" height="22" fill="#fff" /><rect x="8" y="12" width="6" height="6" fill="#f25022" /><rect x="15" y="12" width="6" height="6" fill="#7fba00" /><rect x="8" y="19" width="6" height="6" fill="#00a4ef" /><rect x="15" y="19" width="6" height="6" fill="#ffb900" /></svg>
  ) },
  { icon: (
    <div className="relative flex h-[30px] w-[30px] justify-center bg-white">
      <span className="text-[26px] leading-[21px] font-bold text-[#232f3e]">a</span>
      <svg className="absolute bottom-[4px] left-[5px]" width="20" height="6" fill="none" stroke="#f90" strokeWidth="1.700"><path d="M1 1 Q9 7 18 1.500 M15 1 L18.500 1 L17.500 4" /></svg>
    </div>
  ) },
  { icon: (
    <svg width="28" height="28" viewBox="0 0 28 28">
      <defs><linearGradient id="steam" x1="0" y1="0" x2="0" y2="1"><stop offset="0" stopColor="#101b45" /><stop offset="1" stopColor="#1583b8" /></linearGradient></defs>
      <circle cx="14" cy="14" r="14" fill="url(#steam)" />
      <path d="M1 14 L9 17.500 L14.500 10 L20 14.500 L12.500 21 A4.300 4.300 0 0 1 4.500 21 L1.500 19Z" fill="#fff" />
      <circle cx="18.500" cy="10.500" r="5.400" fill="#fff" /><circle cx="18.500" cy="10.500" r="3.300" fill="#22396b" /><circle cx="18.500" cy="10.500" r="2.400" fill="#e5edf5" />
      <circle cx="8.500" cy="20" r="2.600" fill="none" stroke="#235a8c" strokeWidth="1" />
    </svg>
  ) },
  { open: true, icon: (
    <svg width="28" height="24" viewBox="0 0 28 24"><path d="M1 0 H11 L13 3 H27 V22 H1Z" fill="#ffd75e" /><rect x="0" y="4" width="28" height="19" fill="#ffe694" /><path d="M5 23 V14 Q5 12 7 12 H21 Q23 12 23 14 V23 H19 V17 H9 V23Z" fill="#2fa8e0" /></svg>
  ) },
  { icon: (
    <svg width="30" height="30" viewBox="0 0 30 30"><rect width="30" height="30" rx="3" fill="#f0761c" /><rect x="1" y="1" width="28" height="4" rx="2" fill="#f9a566" /><path d="M9 9 Q14.500 9 15 15 Q15.500 9 21 9 Q24 9 24 12 Q24 15 20 15 Q24 15 24 18 Q24 21.500 21 21.500 Q15.500 21 15 15 Q14.500 21 9 21.500 Q6 21.500 6 18 Q6 15 10 15 Q6 15 6 12 Q6 9 9 9Z" fill="none" stroke="#fff" strokeWidth="3.600" strokeLinejoin="round" /></svg>
  ) },
  { open: true, icon: (
    <svg width="29" height="28" viewBox="0 0 29 28"><path d="M2 2 H22 L24 26 L2 27Z" fill="#f4f4ee" /><path d="M2 19 L23 16 L24 26 L2 27Z" fill="#7fd04a" /><path d="M3 13 Q6 7 10 9 Q14 7 18 10 L21 9 L19 13 Q20 16 16 18 L18 21 L12 19 L6 21 L7 17Z" fill="#4f9a2a" /><circle cx="8" cy="12.500" r="1.500" fill="#1c3310" /><circle cx="13.500" cy="13" r="1.500" fill="#1c3310" /><path d="M5 16 Q10 19 16 15" stroke="#1c3310" fill="none" /><path d="M3 1.500 H21" stroke="#999" strokeDasharray="1 1" strokeWidth="2" /><path d="M27.500 0 L21 18 L20 20 L20 16 L26 0Z" fill="#f0a838" /></svg>
  ) },
  { open: true, focus: true, icon: (
    <svg width="27" height="27" viewBox="0 0 27 27"><circle cx="13.500" cy="13.500" r="13.500" fill="#fbc116" /><path d="M13.500 13.500 L1.800 6.700 A13.500 13.500 0 0 1 25.200 6.700 H13.500Z" fill="#e33b2e" /><path d="M1.800 6.700 A13.500 13.500 0 0 0 12.700 27 L19 17 L8 17Z" fill="#2ba24c" /><circle cx="13.500" cy="13.500" r="6.600" fill="#fff" /><circle cx="13.500" cy="13.500" r="5.200" fill="#4285f4" /></svg>
  ) },
  { open: true, icon: (
    <svg width="28" height="26" viewBox="0 0 28 26"><rect x="12" y="3" width="15" height="20" fill="#fff" stroke="#2b5797" /><path d="M16 6.500 H25 M16 9.500 H25 M16 12.500 H25 M16 15.500 H25 M16 18.500 H25" stroke="#2b5797" strokeWidth="1.200" /><path d="M0 3 L16 0 V26 L0 23Z" fill="#2b5797" /><text x="2" y="17.500" fontSize="12" fontWeight="bold" fill="#fff" fontFamily="Open Sans">W</text></svg>
  ) },
  { icon: (
    <svg width="30" height="30" viewBox="0 0 30 30"><path d="M0 4 L8 0 L18 1 L17 8 L26 2 L30 10 L27 15 L30 24 L18 30 L11 26 L3 28 L2 16Z" fill="#9447f0" /><path d="M0 4 L8 0 L18 1 L16 8 L3 18Z" fill="#f43aa5" /><rect x="6" y="6" width="18" height="18" fill="#0a0a0a" /><text x="8" y="16.500" fontSize="11" fontWeight="bold" fill="#fff" fontFamily="Open Sans">PS</text><path d="M8 21 H14" stroke="#fff" strokeWidth="1.300" /></svg>
  ) },
  { open: true, icon: (
    <div className="relative">
      <svg width="30" height="24" viewBox="0 0 30 24"><path d="M0 8 L15 0 L30 8 V24 H0Z" fill="#fff" /><path d="M2 9 H28 L20 14 L27 21 L15 15.500Z" fill="#111" /></svg>
      <span className="absolute top-[12px] left-[20px] flex h-[20px] w-[20px] items-center justify-center rounded-full border border-[#bbb] bg-[#333] font-['Open_Sans'] text-[14px] text-white">2</span>
    </div>
  ) },
  { open: true, icon: (
    <div className="relative">
      <FaSkype size={29} color="#00aff0" />
      <div className="absolute top-[14px] left-[14px] h-[15px] w-[15px] rounded-full border-[1.500px] border-[#7fba00] bg-white" />
    </div>
  ) },
  { open: true, icon: (
    <svg width="30" height="30" viewBox="0 0 30 30"><path d="M15 0 L22.500 7.500 L15 15 L7.500 7.500Z" fill="#ff8080" /><path d="M7.500 7.500 L15 15 L7.500 22.500 L0 15Z" fill="#80b3ff" /><path d="M22.500 7.500 L30 15 L22.500 22.500 L15 15Z" fill="#8dd35f" /><path d="M15 15 L22.500 22.500 L15 30 L7.500 22.500Z" fill="#ffdd66" /><path d="M7.500 7.500 L22.500 22.500 M22.500 7.500 L7.500 22.500" stroke="#222" strokeWidth="1" /><path d="M10 3 L15 8 V23 M15 9 L20 14" stroke="#222" strokeWidth="2" fill="none" /><g fill="#222"><circle cx="15" cy="8" r="2.500" /><circle cx="20.500" cy="14.500" r="2.500" /><circle cx="15" cy="22.500" r="2.500" /></g></svg>
  ) },
];

function Taskbar() {
  return (
    <footer className="flex h-[50px] shrink-0 items-stretch bg-[#0e0e0e] font-['Open_Sans'] text-white">
      <div className="flex w-[60px] items-center justify-center"><svg width="20" height="20" viewBox="0 0 20 20" fill="#fff"><path d="M0 2.800 L8.200 1.700 V9.500 H0Z M9.200 1.500 L20 0 V9.500 H9.200Z M0 10.500 H8.200 V18.300 L0 17.200Z M9.200 10.500 H20 V20 L9.200 18.500Z" /></svg></div>
      <div className="flex w-[60px] items-center justify-center"><svg width="20" height="21" viewBox="0 0 20 21" fill="none" stroke="#fff" strokeWidth="1.500"><circle cx="13" cy="7.500" r="6.500" /><path d="M8.500 12 L.5 20.500" /></svg></div>
      <div className="flex w-[63px] items-center justify-center pr-[3px]"><svg width="20" height="20" viewBox="0 0 20 20" fill="none" stroke="#fff" strokeWidth="1.300"><path d="M.7 0 V4 H13 V0 M.7 7 H13 V14 H.7Z M.7 20 V17 H13 V20 M18.500 0 V4 M18.500 11 V20" /><path d="M17 7.500 H20" strokeWidth="3" /></svg></div>
      {taskIcons.map((t, i) => (
        <div key={i} className={`flex w-[62px] flex-col items-center ${t.focus ? "bg-[#454545]" : ""}`}>
          <div className="flex h-[47px] items-center justify-center pt-[4px]">{t.icon}</div>
          {t.open && <div className={`h-[3px] bg-[#76b9ed] ${t.focus ? "w-full" : "w-[51px]"}`} />}
        </div>
      ))}
      <div className="ml-auto flex items-center">
        <div className="relative mr-[29px] flex h-[27px] w-[27px] items-center justify-center rounded-full border-2 border-white bg-[#0e96dc] text-[19px] font-bold">
          ?<span className="absolute top-[12px] left-[15px] flex h-[13px] w-[13px] items-center justify-center rounded-full bg-[#ef0a14] text-[10px] leading-none">!</span>
        </div>
        <svg width="18" height="20" viewBox="0 0 18 20" className="mr-[29px]" fill="none" stroke="#fff" strokeWidth="1.300"><circle cx="13" cy="3.800" r="3" /><circle cx="6" cy="10" r="3" /><path d="M9.500 11 Q9.500 7 13 7 Q17 7 17.300 12 M.7 19 Q1 13.500 6 13.500 Q10 13.500 10.500 19" /></svg>
        <svg width="16" height="9" viewBox="0 0 16 9" className="mr-[15px]" fill="none" stroke="#fff" strokeWidth="1.500"><path d="M.7 8.300 L8 1 L15.300 8.300" /></svg>
        <svg width="16" height="17" viewBox="0 0 16 17" className="mr-[12px]" fill="none" stroke="#ddd" strokeWidth="1.300"><path d="M.7 16 A15 15 0 0 1 15 .7 M4.500 16 A11 11 0 0 1 15 5 M8.500 16 A7 7 0 0 1 15 9" /><circle cx="14" cy="15" r="1.500" fill="#fff" stroke="none" /></svg>
        <FaDropbox size={19} className="mr-[11px]" />
        <svg width="19" height="12" viewBox="0 0 19 12" className="mr-[11px]"><rect x=".6" y=".6" width="16" height="10.800" fill="none" stroke="#fff" strokeWidth="1.200" /><rect x="2.500" y="2.500" width="12.300" height="7" fill="#fff" /><rect x="17.500" y="3.500" width="1.500" height="5" fill="#fff" /></svg>
        <svg width="18" height="14" viewBox="0 0 18 14" className="mr-[12px]" fill="none" stroke="#fff" strokeWidth="1.200"><path d="M.6 4.500 H3 L6 1 V13 L3 9.500 H.6Z M10 3.500 L17 10.500 M17 3.500 L10 10.500" /></svg>
        <svg width="30" height="17" viewBox="0 0 30 17" fill="none" stroke="#fff" strokeWidth="1.200"><rect x=".6" y=".6" width="28.800" height="15.800" /><path d="M4 5 H26 M4 8.500 H26" strokeDasharray="2 1.500" strokeWidth="1.500" /><path d="M4 12.500 H7 M9 12.500 H21 M23 12.500 H26" /></svg>
        <div className="w-[55px] text-center text-[14.500px] leading-[22px] tracking-[-0.3px]"><div>NLD</div><div>INTL</div></div>
        <div className="w-[72px] text-center text-[14.500px] leading-[22px] tracking-[-0.1px]"><div className="tracking-[-0.6px]">13:47</div><div>5-2-2019</div></div>
        <svg width="20" height="20" viewBox="0 0 20 20" className="mr-[25px] ml-[21px]" fill="none" stroke="#fff" strokeWidth="1.300"><path d="M.7 .7 H19.300 V16 H13 L10 19 L7.500 16 H.7Z" /></svg>
        <div className="mr-[5px] h-[50px] w-px bg-[#555]" />
      </div>
    </footer>
  );
}

export default function App() {
  return (
    <div className="flex h-[1080px] w-[1920px] flex-col overflow-hidden bg-white font-['Liberation_Sans',sans-serif] leading-normal">
      <TabStrip />
      <AddressBar />
      <Bookmarks />
      <Header />
      <div className="flex min-h-0 flex-1">
        <Rail />
        <IconPanel />
        <Canvas />
        <FormatPanel />
      </div>
      <Taskbar />
    </div>
  );
}
